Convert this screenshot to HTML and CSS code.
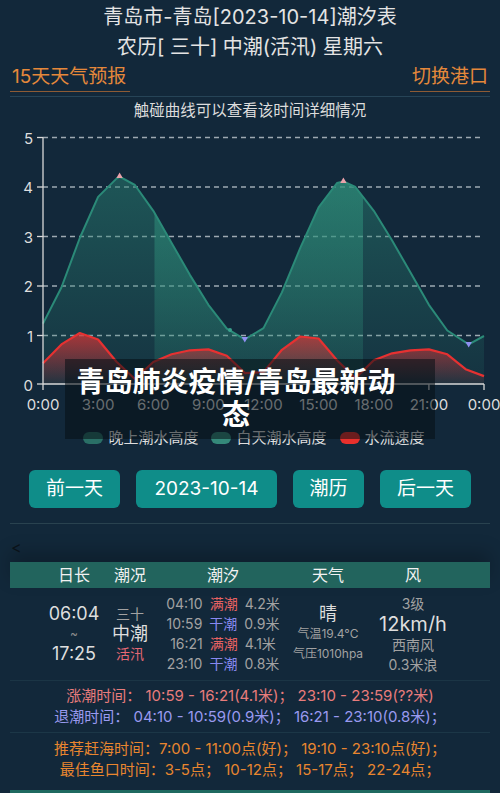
FILE: index.html
```html
<html lang="zh-CN">
<head>
  <meta charset="UTF-8">
  <meta name="viewport" content="width=device-width, initial-scale=1.0">
  <title>青岛潮汐表</title>
  <link rel="stylesheet" href="styles.css">
</head>
<body>
  <header class="top">
    <h1 class="title">青岛市-青岛[2023-10-14]潮汐表</h1>
    <p class="lunar">农历[ 三十] 中潮(活汛) 星期六</p>
    <div class="links">
      <a href="#">15天天气预报</a>
      <a href="#">切换港口</a>
    </div>
  </header>

  <section class="chart">
    <p class="hint">触碰曲线可以查看该时间详细情况</p>
    <svg class="plot" width="500" height="297" viewBox="0 121 500 297">
      <defs>
        <linearGradient id="gNight" gradientUnits="userSpaceOnUse" x1="0" y1="176" x2="0" y2="384">
          <stop offset="0" stop-color="#2a8474" stop-opacity=".5"/>
          <stop offset="1" stop-color="#2a8474" stop-opacity=".12"/>
        </linearGradient>
        <linearGradient id="gDay" gradientUnits="userSpaceOnUse" x1="0" y1="176" x2="0" y2="384">
          <stop offset="0" stop-color="#31977f" stop-opacity=".58"/>
          <stop offset="1" stop-color="#31977f" stop-opacity=".16"/>
        </linearGradient>
        <linearGradient id="gRed" gradientUnits="userSpaceOnUse" x1="0" y1="333" x2="0" y2="384">
          <stop offset="0" stop-color="#e33434" stop-opacity=".72"/>
          <stop offset="1" stop-color="#e33434" stop-opacity=".06"/>
        </linearGradient>
        <clipPath id="tideClip">
          <path d="M43,384 L43,323.6 L61.4,287.5 L79.8,238 L98.1,196.9 L116.5,178.6 L119.6,176.6 L134.9,185 L153.3,210.8 L171.6,242.9 L190,275.1 L208.4,304.8 L226.8,328.6 L244.8,339.4 L263.5,328.1 L281.9,292.4 L300.3,247.9 L318.6,207.3 L337,183 L343.4,181.5 L355.4,187 L373.8,210.8 L392.1,240.5 L410.5,272.6 L428.9,304.8 L447.3,330.5 L468.7,344.4 L484,336 L484,384 Z"/>
        </clipPath>
      </defs>

      <g class="grid">
        <line x1="43" x2="484" y1="137.5" y2="137.5"/>
        <line x1="43" x2="484" y1="187" y2="187"/>
        <line x1="43" x2="484" y1="236.5" y2="236.5"/>
        <line x1="43" x2="484" y1="286" y2="286"/>
        <line x1="43" x2="484" y1="335.5" y2="335.5"/>
      </g>

      <g clip-path="url(#tideClip)">
        <rect x="43" y="170" width="441" height="214" fill="url(#gNight)"/>
        <rect x="154.5" y="170" width="208.5" height="214" fill="url(#gDay)"/>
      </g>
      <path class="tide-line" d="M43,323.6 L61.4,287.5 L79.8,238 L98.1,196.9 L116.5,178.6 L119.6,176.6 L134.9,185 L153.3,210.8 L171.6,242.9 L190,275.1 L208.4,304.8 L226.8,328.6 L244.8,339.4 L263.5,328.1 L281.9,292.4 L300.3,247.9 L318.6,207.3 L337,183 L343.4,181.5 L355.4,187 L373.8,210.8 L392.1,240.5 L410.5,272.6 L428.9,304.8 L447.3,330.5 L468.7,344.4 L484,336"/>

      <path fill="url(#gRed)" d="M43,384 L43,363.2 L61.4,344.4 L79.8,333 L98.1,339.5 L116.5,361.7 L134.9,379 L153.3,362 L171.6,354.3 L190,350.3 L208.4,349.4 L226.8,355.8 L245.1,373.1 L263.5,372.1 L281.9,349.8 L300.3,336.5 L318.6,338.5 L337,360.2 L355.4,378.1 L373.8,360.2 L392.1,353.3 L410.5,350.3 L428.9,349.4 L447.3,354.3 L465.6,369.2 L484,376.1 L484,384 Z"/>
      <path class="speed-line" d="M43,363.2 L61.4,344.4 L79.8,333 L98.1,339.5 L116.5,361.7 L134.9,379 L153.3,362 L171.6,354.3 L190,350.3 L208.4,349.4 L226.8,355.8 L245.1,373.1 L263.5,372.1 L281.9,349.8 L300.3,336.5 L318.6,338.5 L337,360.2 L355.4,378.1 L373.8,360.2 L392.1,353.3 L410.5,350.3 L428.9,349.4 L447.3,354.3 L465.6,369.2 L484,376.1"/>

      <polygon class="mk-high" points="119.6,172.5 116.4,178 122.8,178"/>
      <polygon class="mk-high" points="343.4,177.5 340.2,183 346.6,183"/>
      <polygon class="mk-low" points="241.6,337 248,337 244.8,342.5"/>
      <polygon class="mk-low" points="465.5,342 471.9,342 468.7,347.5"/>
      <circle class="mk-dot" cx="230" cy="330" r="2"/>

      <g class="axis">
        <line x1="43" x2="43" y1="137.5" y2="384"/>
        <line x1="43" x2="484" y1="384" y2="384"/>
        <line x1="37" x2="43" y1="137.5" y2="137.5"/>
        <line x1="37" x2="43" y1="187" y2="187"/>
        <line x1="37" x2="43" y1="236.5" y2="236.5"/>
        <line x1="37" x2="43" y1="286" y2="286"/>
        <line x1="37" x2="43" y1="335.5" y2="335.5"/>
        <line x1="37" x2="43" y1="384" y2="384"/>
        <line x1="43" x2="43" y1="384" y2="390"/>
        <line x1="98.1" x2="98.1" y1="384" y2="390"/>
        <line x1="153.3" x2="153.3" y1="384" y2="390"/>
        <line x1="208.4" x2="208.4" y1="384" y2="390"/>
        <line x1="263.5" x2="263.5" y1="384" y2="390"/>
        <line x1="318.6" x2="318.6" y1="384" y2="390"/>
        <line x1="373.8" x2="373.8" y1="384" y2="390"/>
        <line x1="428.9" x2="428.9" y1="384" y2="390"/>
        <line x1="484" x2="484" y1="384" y2="390"/>
      </g>

      <g class="ylabels">
        <text x="33" y="138">5</text>
        <text x="33" y="187.5">4</text>
        <text x="33" y="237">3</text>
        <text x="33" y="286.5">2</text>
        <text x="33" y="336">1</text>
        <text x="33" y="385">0</text>
      </g>
      <g class="xlabels">
        <text x="43" y="404">0:00</text>
        <text x="98.1" y="404">3:00</text>
        <text x="153.3" y="404">6:00</text>
        <text x="208.4" y="404">9:00</text>
        <text x="263.5" y="404">12:00</text>
        <text x="318.6" y="404">15:00</text>
        <text x="373.8" y="404">18:00</text>
        <text x="428.9" y="404">21:00</text>
        <text x="484" y="404">0:00</text>
      </g>
    </svg>

    <ul class="legend">
      <li><i class="dot night"></i>晚上潮水高度</li>
      <li><i class="dot day"></i>白天潮水高度</li>
      <li><i class="dot speed"></i>水流速度</li>
    </ul>

    <div class="overlay">青岛肺炎疫情/青岛最新动态</div>
  </section>

  <div class="btns">
    <a href="#" class="btn btn-3">前一天</a>
    <a href="#" class="btn btn-date">2023-10-14</a>
    <a href="#" class="btn btn-2">潮历</a>
    <a href="#" class="btn btn-3">后一天</a>
  </div>

  <div class="sep"></div>
  <div class="back">&lt;</div>

  <div class="tide">
    <div class="tide-head">
      <span>日长</span>
      <span>潮况</span>
      <span>潮汐</span>
      <span>天气</span>
      <span>风</span>
    </div>
    <div class="tide-row">
      <div class="cell sun">
        <b>06:04</b>
        <em>~</em>
        <b>17:25</b>
      </div>
      <div class="cell state">
        <span class="lunar-day">三十</span>
        <b>中潮</b>
        <span class="red">活汛</span>
      </div>
      <div class="cell tides">
        <p>04:10<span class="hi">满潮</span>4.2米</p>
        <p>10:59<span class="lo">干潮</span>0.9米</p>
        <p>16:21<span class="hi">满潮</span>4.1米</p>
        <p>23:10<span class="lo">干潮</span>0.8米</p>
      </div>
      <div class="cell weather">
        <b>晴</b>
        <span>气温19.4°C</span>
        <span>气压1010hpa</span>
      </div>
      <div class="cell wind">
        <span>3级</span>
        <b>12km/h</b>
        <span>西南风</span>
        <span>0.3米浪</span>
      </div>
    </div>
  </div>

  <div class="times">
    <p class="rise">涨潮时间：&nbsp;10:59 - 16:21(4.1米)；&nbsp;23:10 - 23:59(??米)</p>
    <p class="fall">退潮时间：&nbsp;04:10 - 10:59(0.9米)；&nbsp;16:21 - 23:10(0.8米)；</p>
    <div class="times-sep"></div>
    <p class="sea">推荐赶海时间：7:00 - 11:00点(好)；&nbsp;19:10 - 23:10点(好)；</p>
    <p class="sea">最佳鱼口时间：3-5点；&nbsp;10-12点；&nbsp;15-17点；&nbsp;22-24点；</p>
  </div>

  <div class="next-head"></div>
</body>
</html>
```

FILE: styles.css
```css
* {
  padding: 0;
  margin: 0;
  box-sizing: border-box;
}
ul {
  list-style: none;
}
a {
  text-decoration: none;
}
body {
  width: 500px;
  height: 793px;
  overflow: hidden;
  background-color: #12283a;
  color: #e2e2e2;
  font-family: Inter, "Noto Sans CJK SC", sans-serif;
}

/* header */
.top {
  padding-top: 2px;
  text-align: center;
}
.title,
.lunar {
  font-size: 20px;
  font-weight: 400;
  line-height: 30px;
  color: #e4e4e4;
}
.links {
  display: flex;
  justify-content: space-between;
  margin: 0 10px;
  padding-bottom: 4px;
  border-bottom: 1px solid #264457;
}
.links a {
  padding: 0 2px;
  font-size: 19px;
  line-height: 29px;
  color: #e5883a;
  border-bottom: 1px solid #8d5b35;
}
.links a:first-child {
  padding-right: 4px;
}

/* chart */
.chart {
  position: relative;
}
.hint {
  margin-top: 4px;
  text-align: center;
  font-size: 15.5px;
  line-height: 20px;
  color: #dcdcdc;
}
.plot {
  display: block;
}
.plot text {
  font-family: Inter, "Noto Sans CJK SC", sans-serif;
  font-size: 15px;
  fill: #dedede;
  dominant-baseline: central;
}
.ylabels text {
  text-anchor: end;
}
.xlabels text {
  text-anchor: middle;
}
.grid line {
  stroke: #b7c0c8;
  stroke-width: 1.5;
  stroke-dasharray: 5 4;
  opacity: .85;
}
.axis line {
  stroke: #d8d8d8;
  stroke-width: 1.3;
}
.tide-line {
  fill: none;
  stroke: #2b8a78;
  stroke-width: 2;
  stroke-linejoin: round;
}
.speed-line {
  fill: none;
  stroke: #e63131;
  stroke-width: 2.2;
  stroke-linejoin: round;
}
.mk-high {
  fill: #eaa2aa;
}
.mk-low {
  fill: #8f8ff2;
}
.mk-dot {
  fill: #3aa08c;
}
.legend {
  display: flex;
  justify-content: center;
  gap: 13px;
  margin-top: 10px;
  padding-left: 8px;
  font-size: 15px;
  line-height: 20px;
  color: #dedede;
}
.legend li {
  display: flex;
  align-items: center;
  gap: 5px;
}
.dot {
  width: 20px;
  height: 12px;
  border-radius: 6px;
}
.dot.night {
  background-color: #2a6f66;
}
.dot.day {
  background-color: #35897a;
}
.dot.speed {
  background-color: #e8302c;
}
.overlay {
  position: absolute;
  left: 65px;
  top: 258px;
  width: 370px;
  height: 80px;
  padding: 0 39px 0 11px;
  display: flex;
  align-items: center;
  justify-content: center;
  text-align: center;
  background-color: rgba(6, 14, 20, .55);
  color: #fff;
  font-size: 28px;
  font-weight: 700;
  line-height: 33px;
}

/* buttons */
.btns {
  display: flex;
  justify-content: center;
  gap: 16px;
  margin-top: 22px;
}
.btn {
  height: 38px;
  line-height: 38px;
  text-align: center;
  border-radius: 6px;
  background-color: #0f8d89;
  color: #fff;
  font-size: 19px;
}
.btn-3 {
  width: 91px;
}
.btn-date {
  width: 141px;
}
.btn-2 {
  width: 71px;
}
.sep {
  margin: 15px 10px 0;
  border-top: 1px solid #29424f;
}
.back {
  margin-top: 13px;
  padding-left: 11px;
  font-size: 16px;
  line-height: 20px;
  color: #0a1219;
}

/* tide table */
.tide {
  margin: 5px 10px 0;
}
.tide-head,
.tide-row {
  display: grid;
  grid-template-columns: 60px 52px 134px 76px 94px;
  padding-left: 34px;
}
.tide-head {
  height: 26px;
  line-height: 26px;
  background-color: #22645d;
  box-shadow: 0 -10px 18px rgba(0, 0, 0, .22);
  font-size: 16px;
  color: #f2f2f2;
  text-align: center;
}
.tide-row {
  height: 93px;
  border-bottom: 1px solid #1b3545;
}
.cell {
  display: flex;
  flex-direction: column;
  align-items: center;
  justify-content: center;
  white-space: nowrap;
  color: #a2a2a2;
}
.cell b {
  font-weight: 400;
  color: #dedede;
}
.sun b {
  font-size: 18px;
  line-height: 20px;
}
.sun em {
  font-style: normal;
  font-size: 12px;
  line-height: 20px;
  color: #8a8a8a;
}
.state span {
  font-size: 14px;
  line-height: 20px;
}
.state b {
  font-size: 18px;
  line-height: 20px;
}
.state .red {
  color: #e46874;
}
.tides p {
  font-size: 14px;
  line-height: 20px;
}
.tides p span {
  margin: 0 7px;
}
.tides .hi {
  color: #e86262;
}
.tides .lo {
  color: #8888f0;
}
.weather b {
  font-size: 18px;
  line-height: 20px;
}
.weather span {
  font-size: 12px;
  line-height: 20px;
}
.wind span {
  font-size: 14px;
  line-height: 20px;
}
.wind b {
  font-size: 20px;
  line-height: 21px;
}

/* times */
.times {
  padding-top: 4px;
  text-align: center;
  font-size: 15px;
  line-height: 21px;
}
.rise {
  color: #e87c7c;
}
.fall {
  color: #9a9af0;
}
.sea {
  color: #e8862f;
}
.times-sep {
  margin: 5px 10px 5px;
  border-top: 1px solid #1c3747;
}
.next-head {
  height: 10px;
  margin: 10px 10px 0;
  background-color: #1f6a60;
}
```
